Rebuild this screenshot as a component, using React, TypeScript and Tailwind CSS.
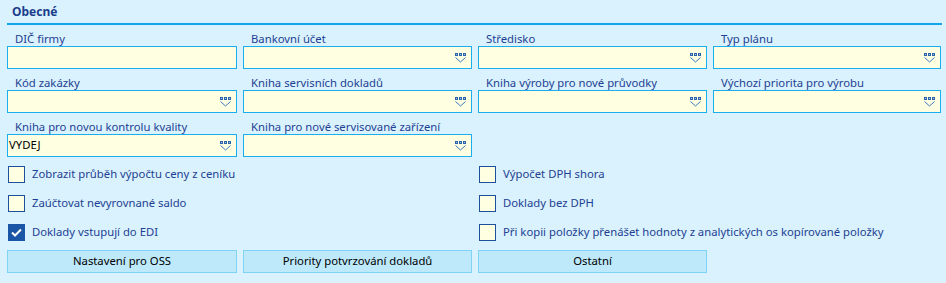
import React from "react";

type FieldDef = { label: string; value?: string; dropdown: boolean };

const rows: FieldDef[][] = [
  [
    { label: "DIČ firmy", dropdown: false },
    { label: "Bankovní účet", dropdown: true },
    { label: "Středisko", dropdown: true },
    { label: "Typ plánu", dropdown: true },
  ],
  [
    { label: "Kód zakázky", dropdown: true },
    { label: "Kniha servisních dokladů", dropdown: true },
    { label: "Kniha výroby pro nové průvodky", dropdown: true },
    { label: "Výchozí priorita pro výrobu", dropdown: true },
  ],
  [
    { label: "Kniha pro novou kontrolu kvality", value: "VYDEJ", dropdown: true },
    { label: "Kniha pro nové servisované zařízení", dropdown: true },
  ],
];

function DropIcon() {
  return (
    <svg width="11" height="10" viewBox="0 0 11 10" className="shrink-0">
      <rect x="0.5" y="0.5" width="2" height="2" fill="#9fc3ea" stroke="#2f64ad" strokeWidth="1" />
      <rect x="4.5" y="0.5" width="2" height="2" fill="#9fc3ea" stroke="#2f64ad" strokeWidth="1" />
      <rect x="8.5" y="0.5" width="2" height="2" fill="#9fc3ea" stroke="#2f64ad" strokeWidth="1" />
      <polyline points="0.5,4.5 5.5,9 10.5,4.5" fill="none" stroke="#3a78c2" strokeWidth="1" />
    </svg>
  );
}

function Field({ f }: { f: FieldDef }) {
  return (
    <div className="pt-[6px]">
      <div className="h-[15px] pl-[8px] text-[11.3px] leading-[15px] text-[#1e3f93] whitespace-nowrap">{f.label}</div>
      <div className="h-[23px] border border-[#1aaef0] bg-[#ffffe1] flex items-center justify-between pl-[1px] pr-[5px]">
        <span className="text-[11.3px] text-black">{f.value ?? ""}</span>
        {f.dropdown && <DropIcon />}
      </div>
    </div>
  );
}

function Check({ label, checked }: { label: string; checked?: boolean }) {
  return (
    <div className="h-[17px] flex items-center pl-[1px]">
      {checked ? (
        <div className="w-[17px] h-[17px] bg-[#1b56a6] flex items-center justify-center">
          <svg width="11" height="9" viewBox="0 0 11 9">
            <polyline points="1,4.5 4,7.5 10,1.5" fill="none" stroke="white" strokeWidth="2" />
          </svg>
        </div>
      ) : (
        <div className="w-[17px] h-[17px] border border-[#1d4f9c] bg-[#ffffe1]" />
      )}
      <span className="ml-[7px] text-[11.3px] text-[#1e3f93] whitespace-nowrap">{label}</span>
    </div>
  );
}

function Btn({ children }: { children: React.ReactNode }) {
  return (
    <div className="h-[23px] border border-[#7fd3f6] bg-[#bde9fb] flex items-center justify-center text-[11.3px] text-black">
      {children}
    </div>
  );
}

// column widths of the form grid
const cols = "grid grid-cols-[230px_229px_229px_228px] gap-x-[6px]";

export default function App() {
  return (
    <div
      className="w-[946px] h-[283px] bg-[#d9f2fd] pl-[7px] pr-[4px]"
      style={{ fontFamily: '"Segoe UI", "Noto Sans", sans-serif' }}
    >
      <div className="h-[23px] flex items-center pl-[5px] text-[12px] font-bold text-[#1c3c8c]">Obecné</div>
      <div className="h-[2px] bg-[#12a5ec]" />

      <div className={cols}>
        {rows.map((r, i) => (
          <React.Fragment key={i}>
            {r.map((f) => (
              <Field key={f.label} f={f} />
            ))}
            {r.length < 4 && <div className="col-span-2" />}
          </React.Fragment>
        ))}
      </div>

      <div className={cols + " mt-[9px]"}>
        <div className="col-span-2 flex flex-col gap-[12px]">
          <Check label="Zobrazit průběh výpočtu ceny z ceníku" />
          <Check label="Zaúčtovat nevyrovnané saldo" />
          <Check label="Doklady vstupují do EDI" checked />
        </div>
        <div className="col-span-2 flex flex-col gap-[12px]">
          <Check label="Výpočet DPH shora" />
          <Check label="Doklady bez DPH" />
          <Check label="Při kopii položky přenášet hodnoty z analytických os kopírované položky" />
        </div>
      </div>

      <div className={cols + " mt-[9px]"}>
        <Btn>Nastavení pro OSS</Btn>
        <Btn>Priority potvrzování dokladů</Btn>
        <Btn>Ostatní</Btn>
      </div>
    </div>
  );
}
